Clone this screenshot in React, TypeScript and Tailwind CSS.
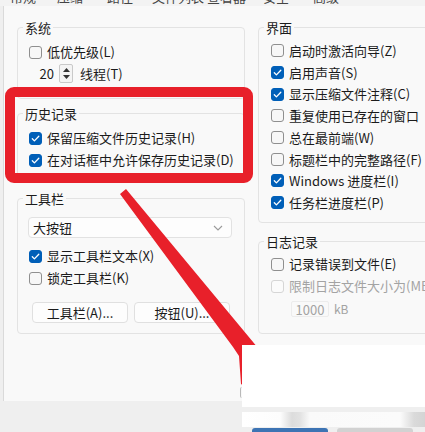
import React from 'react';

type CheckProps = {
  label: string;
  checked?: boolean;
  disabled?: boolean;
  h?: string;
};

function Check({ label, checked = false, disabled = false, h = 'h-[22px]' }: CheckProps) {
  const box = checked
    ? 'bg-[#005fb8] border-[#005fb8]'
    : disabled
      ? 'bg-[#fbfbfb] border-[#d6d6d6]'
      : 'bg-[#f7f7f7] border-[#8f8f8f]';
  return (
    <div className={`flex items-center whitespace-nowrap ${h}`}>
      <span className={`w-[13px] h-[13px] shrink-0 rounded-[3px] border flex items-center justify-center ${box}`}>
        {checked && (
          <svg width="11" height="11" viewBox="0 0 11 11" fill="none">
            <path d="M2.3 5.8 L4.4 7.9 L8.8 3.3" stroke="#fff" strokeWidth="1.3" strokeLinecap="round" strokeLinejoin="round" />
          </svg>
        )}
      </span>
      <span className={`ml-[5px] ${disabled ? 'text-[#a3a3a3]' : 'text-[#1b1b1b]'}`}>{label}</span>
    </div>
  );
}

function GroupBox({ title, className, children }: { title: string; className: string; children?: React.ReactNode }) {
  return (
    <div className={`border border-[#e3e3e3] rounded-[4px] ${className}`}>
      <div className="-mt-[9px] ml-[5px] px-[2px] w-fit h-[18px] leading-[18px] bg-[#f9f9f9] text-[#1b1b1b]">{title}</div>
      {children}
    </div>
  );
}

export default function App() {
  return (
    <div className="relative w-[425px] h-[432px] overflow-hidden bg-[#efefef] text-[13px] font-['Noto_Sans_CJK_SC','Noto_Sans',sans-serif]">
      {/* tab strip, cut off at the top */}
      <div className="h-[6px] overflow-hidden bg-[#f3f3f3] text-[#444]">
        <div className="flex -mt-[12px] pl-[10px] leading-[18px] whitespace-nowrap">
          <span className="w-[47px]">常规</span>
          <span className="w-[50px]">压缩</span>
          <span className="w-[45px]">路径</span>
          <span className="w-[55px]">文件列表</span>
          <span className="w-[56px]">查看器</span>
          <span className="w-[50px]">安全</span>
          <span>高级</span>
        </div>
      </div>

      {/* dialog page */}
      <div className="ml-[3px] h-[395px] bg-[#f9f9f9] border-l border-[#dadada] flex gap-[13px] pl-[13px] pt-[21px]">
        {/* left column */}
        <div className="w-[228px] shrink-0 flex flex-col">
          <GroupBox title="系统" className="h-[72px]">
            <div className="pl-[11px] mt-[4px]">
              <Check label="低优先级(L)" />
              <div className="flex items-center h-[21px] whitespace-nowrap">
                <div className="w-[30px] h-[19px] text-right pr-[5px] leading-[19px] text-[#1b1b1b]">20</div>
                <div className="w-[14px] h-[19px] border border-[#c9c9c9] rounded-[2px] bg-[#f4f4f4] flex flex-col items-center justify-center gap-[3px]">
                  <svg width="7" height="4" viewBox="0 0 7 4"><path d="M0 4 L3.5 0 L7 4 Z" fill="#333" /></svg>
                  <svg width="7" height="4" viewBox="0 0 7 4"><path d="M0 0 L3.5 4 L7 0 Z" fill="#333" /></svg>
                </div>
                <span className="ml-[7px] text-[#1b1b1b]">线程(T)</span>
              </div>
            </div>
          </GroupBox>

          <GroupBox title="历史记录" className="h-[66px] mt-[14px]">
            <div className="pl-[11px] mt-[4px]">
              <Check label="保留压缩文件历史记录(H)" checked />
              <Check label="在对话框中允许保存历史记录(D)" checked />
            </div>
          </GroupBox>

          <GroupBox title="工具栏" className="h-[136px] mt-[19px]">
            <div className="ml-[10px] mt-[9px] w-[204px] h-[21px] border border-[#e2e2e2] rounded-[4px] bg-[#fdfdfd] flex items-center justify-between pl-[4px] pr-[8px] text-[#1b1b1b]">
              <span>大按钮</span>
              <svg width="10" height="6" viewBox="0 0 10 6" fill="none">
                <path d="M1 1 L5 5 L9 1" stroke="#9a9a9a" strokeWidth="1.1" />
              </svg>
            </div>
            <div className="pl-[11px] mt-[7px]">
              <Check label="显示工具栏文本(X)" checked />
              <Check label="锁定工具栏(K)" />
            </div>
            <div className="flex gap-[6px] ml-[14px] mt-[13px]">
              <div className="w-[96px] h-[21px] border border-[#e0e0e0] rounded-[4px] bg-[#fdfdfd] flex items-center justify-center text-[#1b1b1b]">工具栏(A)...</div>
              <div className="w-[96px] h-[21px] border border-[#e0e0e0] rounded-[4px] bg-[#fdfdfd] flex items-center justify-center text-[#1b1b1b]">按钮(U)...</div>
            </div>
          </GroupBox>
        </div>

        {/* right column */}
        <div className="w-[200px] shrink-0 flex flex-col">
          <GroupBox title="界面" className="h-[196px]">
            <div className="pl-[12px] mt-[3px]">
              <Check h="h-[21.7px]" label="启动时激活向导(Z)" />
              <Check h="h-[21.7px]" label="启用声音(S)" checked />
              <Check h="h-[21.7px]" label="显示压缩文件注释(C)" checked />
              <Check h="h-[21.7px]" label="重复使用已存在的窗口" />
              <Check h="h-[21.7px]" label="总在最前端(W)" />
              <Check h="h-[21.7px]" label="标题栏中的完整路径(F)" />
              <Check h="h-[21.7px]" label="Windows 进度栏(I)" checked />
              <Check h="h-[21.7px]" label="任务栏进度栏(P)" checked />
            </div>
          </GroupBox>

          <GroupBox title="日志记录" className="h-[93px] mt-[18px]">
            <div className="pl-[12px] mt-[2px]">
              <Check label="记录错误到文件(E)" />
              <Check label="限制日志文件大小为(MB)" disabled />
            </div>
            <div className="flex items-center h-[24px] ml-[32px] text-[#a3a3a3]">
              <div className="w-[38px] h-[16px] border border-[#ececec] rounded-[2px] flex items-center justify-center leading-none">1000</div>
              <span className="ml-[5px] text-[12px]">kB</span>
            </div>
          </GroupBox>
        </div>
      </div>

      {/* red highlight box */}
      <div className="absolute left-[5px] top-[87px] w-[248px] h-[96px] border-[10px] border-[#e8202a] rounded-[9px]" />

      {/* red arrow */}
      <svg className="absolute inset-0 pointer-events-none" width="425" height="432" viewBox="0 0 425 432">
        <polygon points="120,194 126,189 258,348 262,398 241,384 239,356 233,347" fill="#e8202a" />
      </svg>

      {/* covering white patch and blurred strip */}
      <div className="absolute left-[242px] top-[345px] w-[183px] h-[62px] bg-white" />
      <div className="absolute left-[240px] top-[387px] w-[2px] h-[11px] rounded-l-full border-l border-[#b9b9b9]" />
      <div className="absolute left-[242px] top-[412px] w-[183px] h-[15px] bg-[linear-gradient(90deg,#ffffff_0px,#fdfdfd_38px,#dcdcdc_50px,#e2e2e2_58px,#fafafa_68px,#fbfbfb_158px,#dadada_172px,#d4d4d4_183px)]" />
      <div className="absolute left-[252px] top-[428px] w-[76px] h-[4px] rounded-t-[3px] bg-[#3d74b4]" />
      <div className="absolute left-[337px] top-[428px] w-[76px] h-[4px] rounded-t-[3px] bg-[#d2d2d2]" />
    </div>
  );
}
